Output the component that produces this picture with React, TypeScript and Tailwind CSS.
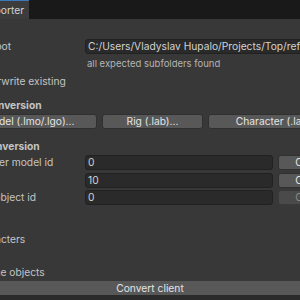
import React from 'react';

const font = { fontFamily: 'Inter, "Noto Sans", sans-serif' };

const Field = ({ value, className = '' }: { value: string; className?: string }) => (
  <div
    className={`h-[15px] bg-[#2a2a2a] border border-[#212121] rounded-[3px] pl-[2px] flex items-center text-[#d2d2d2] whitespace-nowrap overflow-hidden ${className}`}
  >
    {value}
  </div>
);

const Button = ({ label, className = '', disabled = false }: { label: string; className?: string; disabled?: boolean }) => (
  <div
    className={`h-[15px] rounded-[3px] border flex items-center justify-center whitespace-nowrap ${
      disabled ? 'bg-[#4a4a4a] border-[#3a3a3a] text-[#8a8a8a]' : 'bg-[#585858] border-[#303030] text-[#e4e4e4]'
    } ${className}`}
  >
    {label}
  </div>
);

// left-hand toggle: the box sits off-screen, only the label shows
const Toggle = ({ label, className = '' }: { label: string; className?: string }) => (
  <div className={`h-[16px] flex items-center ${className}`}>
    <div className="w-[13px] h-[13px] shrink-0 bg-[#2a2a2a] border border-[#212121] rounded-[3px]" />
    <span className="text-[#c4c4c4] whitespace-nowrap">{label}</span>
  </div>
);

const IdRow = ({ label, value, disabled = false, className = '' }: { label: string; value: string; disabled?: boolean; className?: string }) => (
  <div className={`flex items-center ${className}`}>
    <div className="w-[124px] shrink-0 text-[#c4c4c4] whitespace-nowrap">{label}</div>
    <Field value={value} className="w-[188px] shrink-0" />
    <Button label="Copy" disabled={disabled} className="w-[60px] shrink-0 ml-[5px]" />
  </div>
);

export default function App() {
  return (
    <div className="w-[300px] h-[300px] overflow-hidden bg-[#383838] flex flex-col text-[10.25px] leading-none" style={font}>
      {/* tab strip */}
      <div className="h-[19px] shrink-0 bg-[#191919] flex">
        <div className="w-[29px] bg-[#3c3c3c] border-t border-[#3a79bb] flex items-center justify-end overflow-hidden pr-[5px]">
          <span className="text-[#d2d2d2] whitespace-nowrap">Exporter</span>
        </div>
      </div>

      <div className="-ml-[39px] w-[420px] flex flex-col shrink-0">
        <div className="flex items-center mt-[20px]">
          <div className="w-[124px] shrink-0 text-[#c4c4c4] whitespace-nowrap">Client root</div>
          <Field value="C:/Users/Vladyslav Hupalo/Projects/Top/reference/client" className="flex-1" />
        </div>
        <div className="h-[14px] mt-[3px] pl-[126px] flex items-center text-[9.5px] text-[#b4b4b4]">
          all expected subfolders found
        </div>
        <Toggle label="Overwrite existing" className="mt-[2px] gap-[4px]" />

        <div className="h-[16px] mt-[8px] -ml-[9px] flex items-center font-bold text-[#c4c4c4] whitespace-nowrap">Model conversion</div>
        <div className="flex mt-[1px] gap-[5px]">
          <Button label="Model (.lmo/.lgo)..." className="w-[136px]" />
          <Button label="Rig (.lab)..." className="w-[101px]" />
          <Button label="Character (.lab)..." className="w-[140px]" />
        </div>

        <div className="h-[16px] mt-[9px] -ml-[9px] flex items-center font-bold text-[#c4c4c4] whitespace-nowrap">Client conversion</div>
        <IdRow label="Character model id" value="0" className="mt-[1px]" />
        <IdRow label="" value="10" className="mt-[3px]" />
        <IdRow label="Scene object id" value="0" disabled className="mt-[2px]" />

        <Toggle label="Characters" className="mt-[26px] -ml-[3px] gap-[1px]" />
        <Toggle label="Scene objects" className="mt-[17px] gap-[2px]" />
      </div>

      <div className="mt-[1px] h-[14px] shrink-0 bg-[#585858] flex items-center justify-center text-[#e4e4e4]">
        Convert client
      </div>
      <div className="flex-1 bg-[#2b2b2b]" />
    </div>
  );
}
